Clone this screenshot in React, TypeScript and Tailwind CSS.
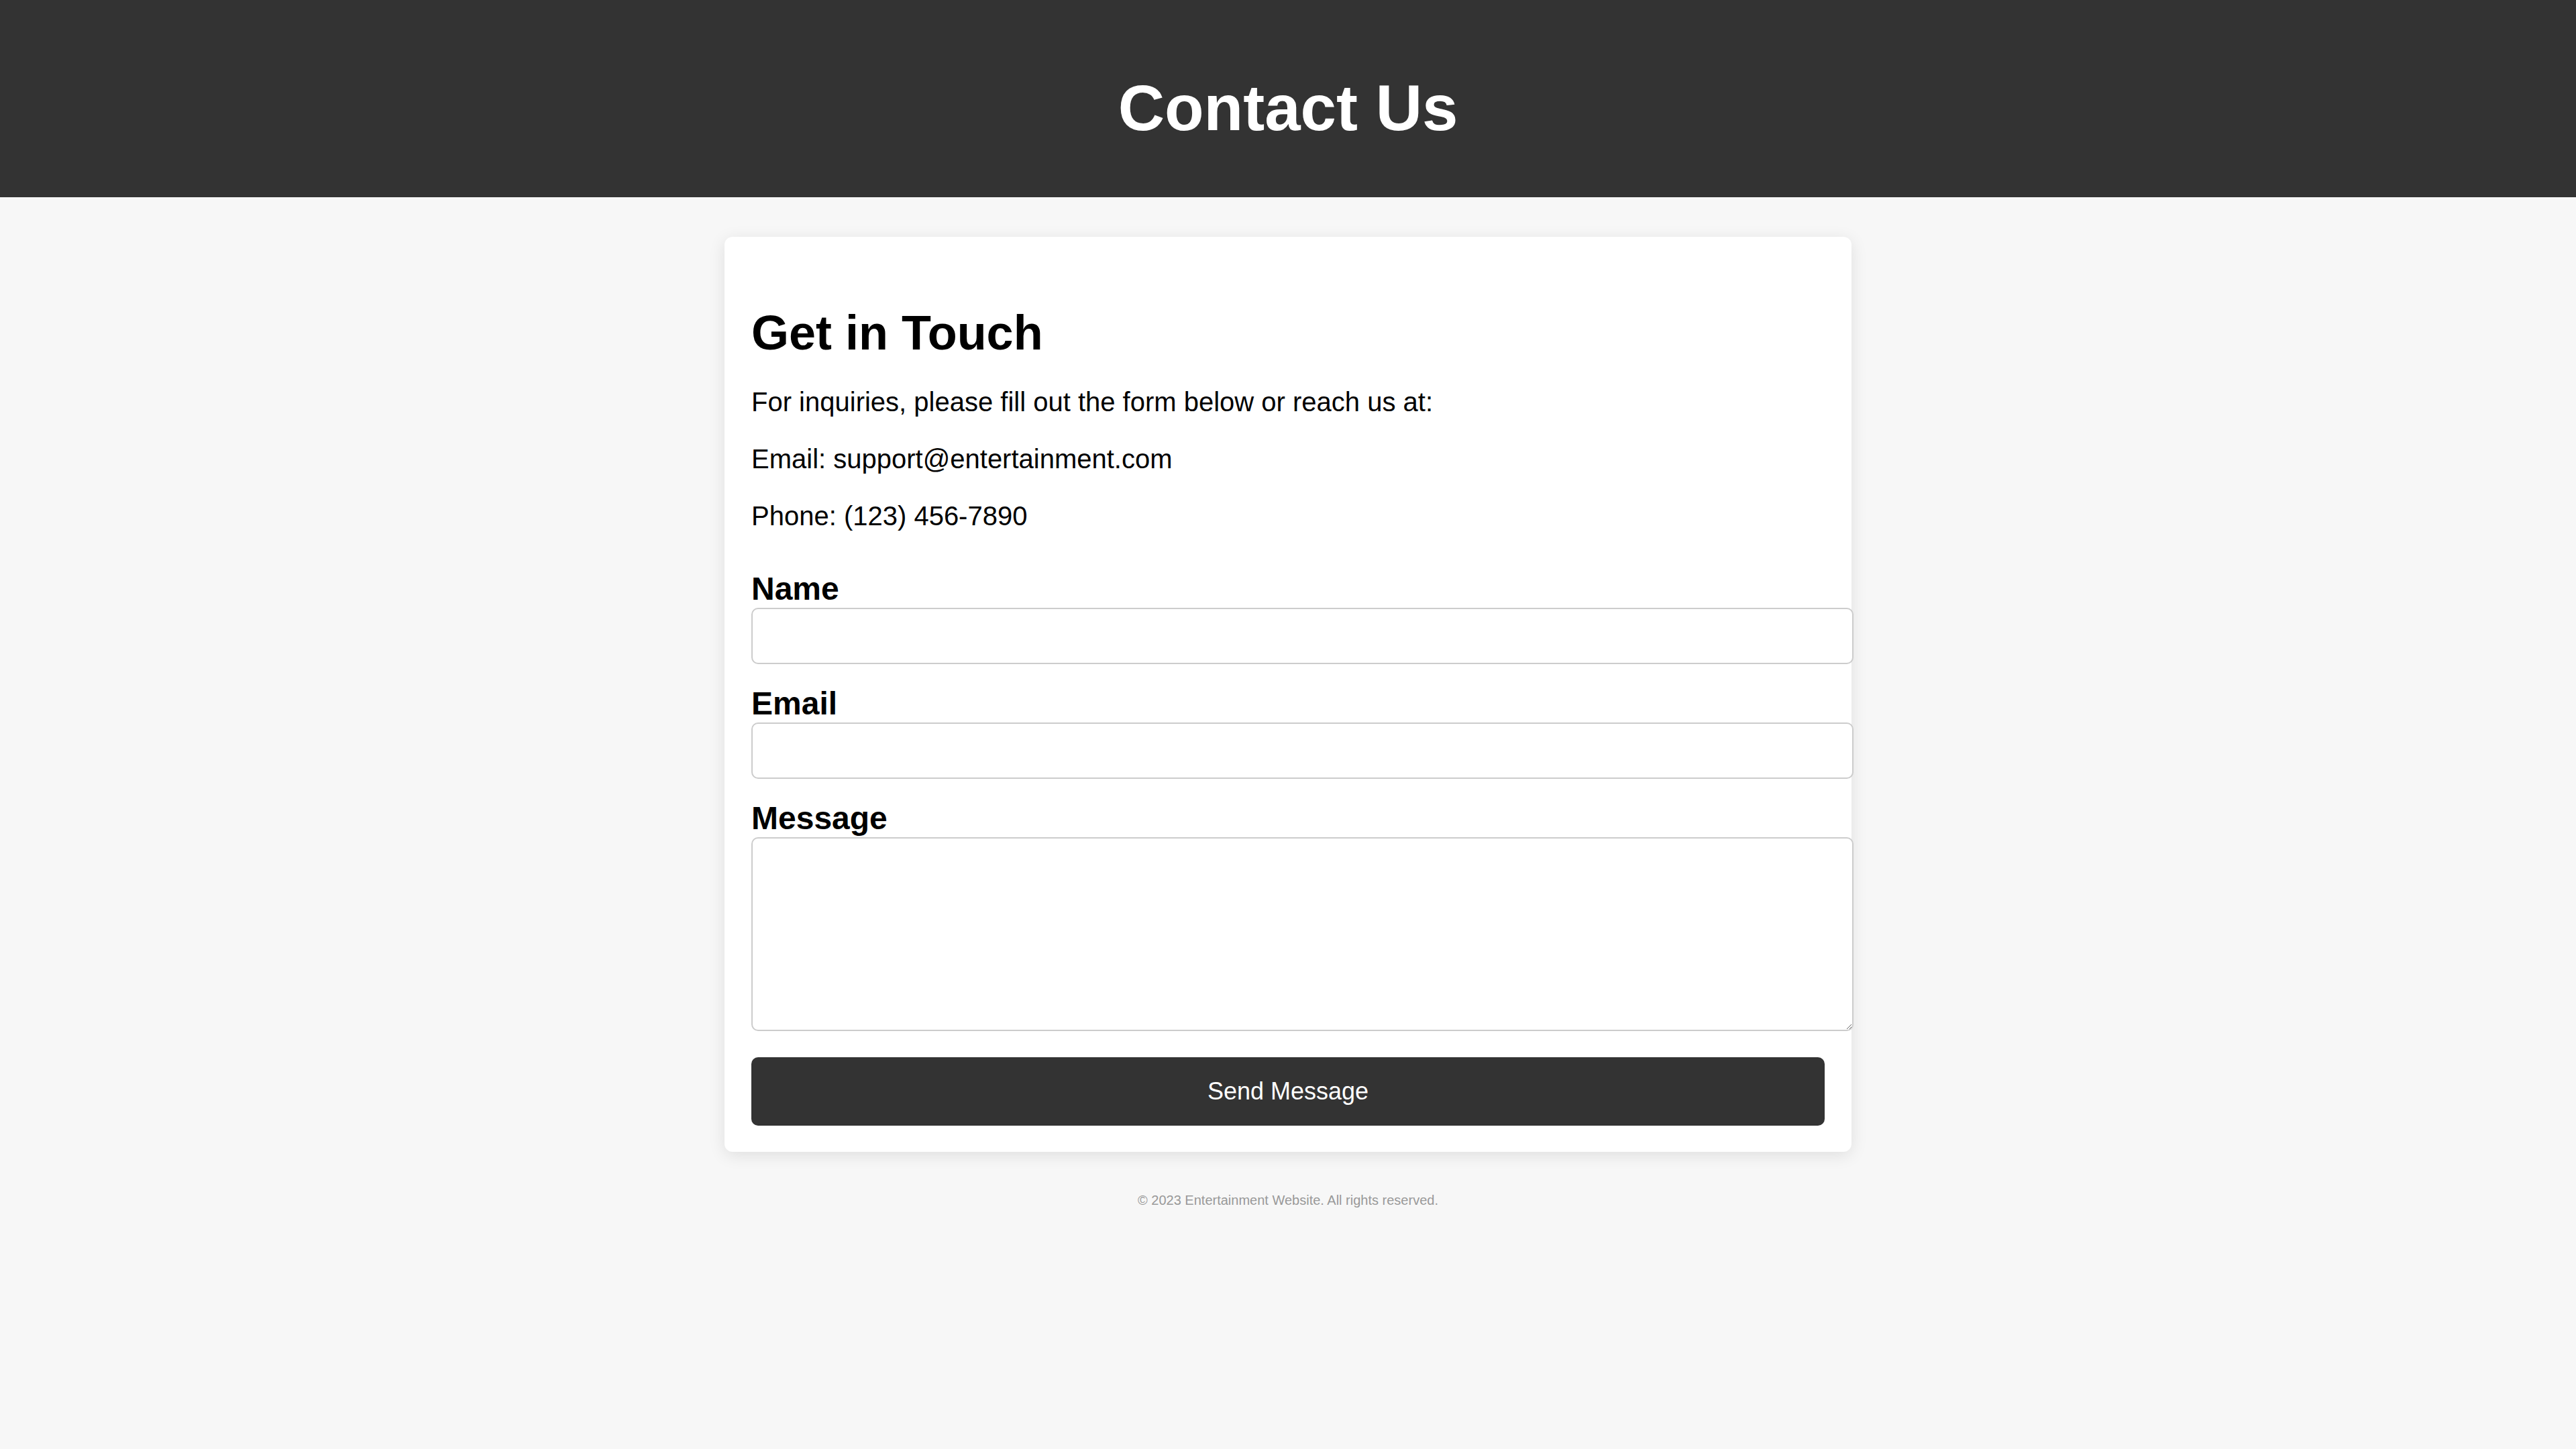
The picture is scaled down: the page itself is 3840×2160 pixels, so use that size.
import React from 'react';

// --- Contact page ---
export default function App() {
    return (
        <div className="min-h-screen bg-[#f7f7f7] text-black font-['Liberation_Sans',Arial,sans-serif]">
            {/* Header */}
            <header className="h-[294px] bg-[#333333] pt-[106px]">
                <h1 className="text-center text-[96px] leading-[110px] font-bold text-white">Contact Us</h1>
            </header>

            {/* Card */}
            <main className="pt-[59px]">
                <section className="w-[1680px] mx-auto bg-white rounded-[12px] shadow-[0_5px_25px_rgba(0,0,0,0.1)] px-[40px] pt-[40px] pb-[39px]">
                    <h2 className="mt-[62px] text-[72px] leading-[83px] font-bold">Get in Touch</h2>
                    <p className="mt-[38px] text-[40px] leading-[46px]">For inquiries, please fill out the form below or reach us at:</p>
                    <p className="mt-[39px] text-[40px] leading-[46px]">Email: support@entertainment.com</p>
                    <p className="mt-[39px] text-[40px] leading-[46px]">Phone: (123) 456-7890</p>

                    <form className="flex flex-col mt-[58px]" onSubmit={(e) => e.preventDefault()}>
                        <label htmlFor="name" className="text-[48px] leading-[56px] font-bold">Name</label>
                        <input
                            id="name"
                            type="text"
                            className="w-[1643px] h-[84px] bg-white border-2 border-[#cccccc] rounded-[10px] px-[20px] text-[40px] outline-none"
                        />
                        <label htmlFor="email" className="mt-[31px] text-[48px] leading-[56px] font-bold">Email</label>
                        <input
                            id="email"
                            type="email"
                            className="w-[1643px] h-[84px] bg-white border-2 border-[#cccccc] rounded-[10px] px-[20px] text-[40px] outline-none"
                        />
                        <label htmlFor="message" className="mt-[31px] text-[48px] leading-[56px] font-bold">Message</label>
                        <textarea
                            id="message"
                            className="w-[1643px] h-[289px] bg-white border-2 border-[#cccccc] rounded-[10px] px-[20px] py-[20px] text-[40px] outline-none"
                        />
                        <button
                            type="submit"
                            className="mt-[39px] h-[102px] w-full flex items-center justify-center bg-[#333333] text-white text-[36px] rounded-[10px]"
                        >
                            Send Message
                        </button>
                    </form>
                </section>
            </main>

            {/* Footer */}
            <footer className="mt-[61px] text-center text-[20px] leading-[23px] text-[#999999]">
                © 2023 Entertainment Website. All rights reserved.
            </footer>
        </div>
    );
}
